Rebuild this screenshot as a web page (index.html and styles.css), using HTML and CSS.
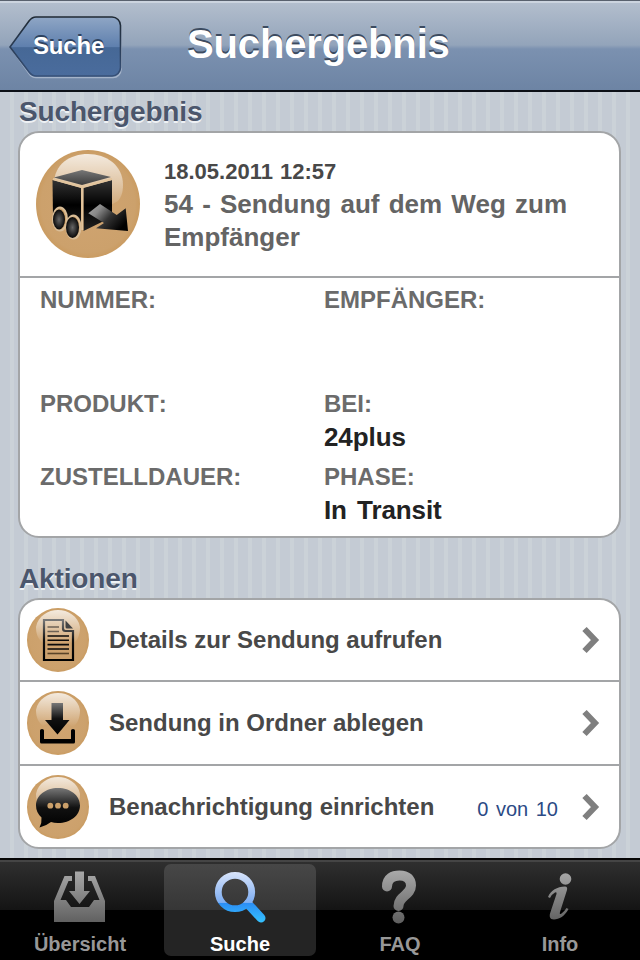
FILE: index.html
```html
<!DOCTYPE html>
<html lang="de">

<head>
    <meta charset="UTF-8">
    <meta name="viewport" content="width=device-width, initial-scale=1.0">
    <title>Suchergebnis</title>
    <link rel="stylesheet" href="styles.css">
</head>

<body>
    <!-- shared gradients and the paper button behind the icons -->
    <svg class="defs" width="0" height="0">
        <defs>
            <linearGradient id="gloss" x1="0" y1="0" x2="0" y2="1">
                <stop offset="0" stop-color="#fff" stop-opacity=".78"/>
                <stop offset=".5" stop-color="#fff" stop-opacity=".4"/>
                <stop offset="1" stop-color="#fff" stop-opacity="0"/>
            </linearGradient>
            <linearGradient id="ink" x1="0" y1="0" x2="0" y2="1">
                <stop offset="0" stop-color="#777"/>
                <stop offset=".5" stop-color="#111"/>
                <stop offset="1" stop-color="#000"/>
            </linearGradient>
            <linearGradient id="lid" x1="0" y1="0" x2="0" y2="1">
                <stop offset="0" stop-color="#777"/>
                <stop offset="1" stop-color="#3c3c3c"/>
            </linearGradient>
            <linearGradient id="side" x1="0" y1="0" x2="0" y2="1">
                <stop offset="0" stop-color="#333"/>
                <stop offset=".5" stop-color="#000"/>
                <stop offset="1" stop-color="#222"/>
            </linearGradient>
            <linearGradient id="arrow" x1="0" y1="0" x2="1" y2=".6">
                <stop offset="0" stop-color="#aaa"/>
                <stop offset=".3" stop-color="#888"/>
                <stop offset=".6" stop-color="#333"/>
                <stop offset="1" stop-color="#000"/>
            </linearGradient>
            <radialGradient id="wheel">
                <stop offset="0" stop-color="#666"/>
                <stop offset="1" stop-color="#080808"/>
            </radialGradient>
            <radialGradient id="paper">
                <stop offset="0" stop-color="#d0a471"/>
                <stop offset=".9" stop-color="#cca16c"/>
                <stop offset="1" stop-color="#ca9c62"/>
            </radialGradient>
            <linearGradient id="grey" gradientUnits="userSpaceOnUse" x1="0" y1="0" x2="0" y2="54">
                <stop offset="0" stop-color="#aaa"/>
                <stop offset="1" stop-color="#5e5e5e"/>
            </linearGradient>
            <linearGradient id="blue" gradientUnits="userSpaceOnUse" x1="0" y1="0" x2="0" y2="54">
                <stop offset="0" stop-color="#dfe8fb"/>
                <stop offset=".5" stop-color="#8db6f3"/>
                <stop offset=".6" stop-color="#7fb0f3"/>
                <stop offset=".62" stop-color="#2c8ff5"/>
                <stop offset="1" stop-color="#35c6ff"/>
            </linearGradient>
            <symbol id="button" viewBox="0 0 62 64">
                <ellipse cx="31" cy="32" rx="31" ry="32" fill="url(#paper)"/>
                <path d="M9 19C11 8 21 2 31 2s20 6 22 17c0 9-3 14-7 17-9-6-21-6-30-1-5-4-7-9-7-16z" fill="url(#gloss)"/>
            </symbol>
        </defs>
    </svg>

    <header class="navbar">
        <a class="back">
            <svg class="back-shape" width="114" height="64" viewBox="0 0 114 64">
                <defs>
                    <linearGradient id="backfill" x1="0" y1="0" x2="0" y2="1">
                        <stop offset="0" stop-color="#8fa6c5"/>
                        <stop offset=".5" stop-color="#5f80ae"/>
                        <stop offset=".52" stop-color="#466896"/>
                        <stop offset="1" stop-color="#4a6c9d"/>
                    </linearGradient>
                    <linearGradient id="backline" x1="0" y1="0" x2="0" y2="1">
                        <stop offset="0" stop-color="#1f2933"/>
                        <stop offset="1" stop-color="#365078"/>
                    </linearGradient>
                </defs>
                <path d="M27 2.500H104a8 8 0 0 1 8 8V53.500a8 8 0 0 1-8 8H27q-4 0-7-4L2 32 20 6.500q3-4 7-4z" fill="none" stroke="#a5b4ca" stroke-width="1.500"/>
                <path d="M27 1H103a8.500 8.500 0 0 1 8.500 8.500V51.500a8.500 8.500 0 0 1-8.500 8.500H27q-4 0-7-4L1 31 20 5q3-4 7-4z" fill="url(#backfill)" stroke="url(#backline)" stroke-width="1.600"/>
            </svg>
            <span class="back-text">Suche</span>
        </a>
        <h1>Suchergebnis</h1>
    </header>

    <main class="content">
        <h2>Suchergebnis</h2>
        <section class="card result">
            <div class="status">
                <svg class="status-icon" width="104" height="108" viewBox="0 0 104 108">
                    <ellipse cx="52" cy="54" rx="52" ry="54" fill="url(#paper)"/>
                    <path d="M18 34C18 14 34 4 52 4s35 11 35 31c0 8-2 12-5 16C67 60 39 68 29 58 21 50 18 44 18 34z" fill="url(#gloss)"/>
                    <path d="M18 27.500 46 20 75 27 46 35z" fill="url(#lid)"/>
                    <path d="M16.500 30 45 38V80L17 68z" fill="url(#side)"/>
                    <path d="M47.500 38 76 30V67L47.500 81z" fill="url(#side)"/>
                    <path d="M17 29 46 37 76 29M46.300 37V80" fill="none" stroke="#e2c49c" stroke-width="2"/>
                    <ellipse cx="24" cy="69" rx="7" ry="11.500" fill="#cba06a" stroke="#d9bd97" stroke-width="2"/>
                    <ellipse cx="37.500" cy="77" rx="7" ry="11.500" fill="#cba06a" stroke="#d9bd97" stroke-width="2"/>
                    <ellipse cx="23" cy="69.500" rx="6" ry="10" fill="url(#wheel)"/>
                    <ellipse cx="36.500" cy="77.500" rx="6.500" ry="10.500" fill="url(#wheel)"/>
                    <path d="M52.300 63.300 64 54 80.700 65 89.700 58.300 92 81 60 78.300 68 73z" fill="url(#arrow)"/>
                </svg>
                <div class="status-text">
                    <p class="date">18.05.2011 12:57</p>
                    <p class="message">54 - Sendung auf dem Weg zum Empfänger</p>
                </div>
            </div>
            <dl class="details">
                <div><dt>NUMMER:</dt></div>
                <div><dt>EMPFÄNGER:</dt></div>
                <div><dt>PRODUKT:</dt></div>
                <div><dt>BEI:</dt><dd>24plus</dd></div>
                <div><dt>ZUSTELLDAUER:</dt></div>
                <div><dt>PHASE:</dt><dd>In Transit</dd></div>
            </dl>
        </section>

        <h2 class="second">Aktionen</h2>
        <ul class="card actions">
            <li>
                <svg class="icon" width="62" height="64" viewBox="0 0 62 64">
                    <use href="#button" width="62" height="64"/>
                    <path d="M17 12H36V20.500q0 2.500 2.500 2.500H46V52H17z" fill="none" stroke="url(#ink)" stroke-width="2.200"/>
                    <path d="M38.500 12.500 46 20.500H40q-1.500 0-1.500-1.500z" fill="#444"/>
                    <path d="M20.500 19H32M20.500 23.500H32" stroke="#6e6255" stroke-width="1.500"/>
                    <path d="M20.500 28H42M20.500 32.300H42M20.500 36.600H42M20.500 41H42" stroke="#0a0a0a" stroke-width="1.600"/>
                    <path d="M20.500 45.500H42" stroke="#5a4428" stroke-width="1.600"/>
                </svg>
                <span class="label">Details zur Sendung aufrufen</span>
                <svg class="chevron" width="20" height="28" viewBox="0 0 20 28"><path d="M3.500 3 14 14 3.500 25" fill="none" stroke="#7f7f7f" stroke-width="6"/></svg>
            </li>
            <li>
                <svg class="icon" width="62" height="64" viewBox="0 0 62 64">
                    <use href="#button" width="62" height="64"/>
                    <path d="M24.500 12H36V29H42.500L30.500 43.500 18 29H24.500z" fill="url(#ink)"/>
                    <path d="M13 39.500q0-1.500 2-1.500t2 1.500V48H44V39.500q0-1.500 2-1.500t2 1.500V51q0 1.500-1.500 1.500H14.500Q13 52.500 13 51z" fill="#000"/>
                </svg>
                <span class="label">Sendung in Ordner ablegen</span>
                <svg class="chevron" width="20" height="28" viewBox="0 0 20 28"><path d="M3.500 3 14 14 3.500 25" fill="none" stroke="#7f7f7f" stroke-width="6"/></svg>
            </li>
            <li>
                <svg class="icon" width="62" height="64" viewBox="0 0 62 64">
                    <use href="#button" width="62" height="64"/>
                    <path d="M31 13C43.500 13 53 20.500 53 30.500S43.500 48 31 48q-4 0-7-1-5 4-11.500 5.500Q15 48 14.500 42.500 9 37.500 9 30.500C9 20.500 18.500 13 31 13z" fill="url(#ink)"/>
                    <g fill="#cba06a"><circle cx="23.300" cy="30.700" r="2.900"/><circle cx="31" cy="30.700" r="2.900"/><circle cx="38.700" cy="30.700" r="2.900"/></g>
                </svg>
                <span class="label">Benachrichtigung einrichten</span>
                <span class="count">0 von 10</span>
                <svg class="chevron" width="20" height="28" viewBox="0 0 20 28"><path d="M3.500 3 14 14 3.500 25" fill="none" stroke="#7f7f7f" stroke-width="6"/></svg>
            </li>
        </ul>
    </main>

    <nav class="tabbar">
        <a class="tab">
            <svg width="60" height="56" viewBox="0 0 60 56">
                <path d="M14.500 6H22V11H18.500L10.500 30H16L21 37H39L44 30H49.500L41.500 11H38V6H45L55 31V52H4V31z" fill="url(#grey)"/>
                <path d="M25 1.500H34V21H40L29.500 34 19 21H25z" fill="url(#grey)"/>
            </svg>
            <span>Übersicht</span>
        </a>
        <a class="tab active">
            <svg width="60" height="56" viewBox="0 0 60 56">
                <path d="M38 34 51 48" stroke="url(#blue)" stroke-width="9" stroke-linecap="round"/>
                <circle cx="25" cy="22" r="16.700" fill="none" stroke="url(#blue)" stroke-width="6.800"/>
            </svg>
            <span>Suche</span>
        </a>
        <a class="tab">
            <svg width="60" height="56" viewBox="0 0 60 56">
                <path d="M17 16.500C17 8 23 5.500 29.500 5.500 37 5.500 41 9 41 15.500 41 25 28.500 26 28.500 36" fill="none" stroke="url(#grey)" stroke-width="10" stroke-linecap="round"/>
                <circle cx="28.500" cy="47.500" r="6" fill="url(#grey)"/>
            </svg>
            <span>FAQ</span>
        </a>
        <a class="tab">
            <svg width="60" height="56" viewBox="0 0 60 56">
                <circle cx="35.500" cy="9" r="5.800" fill="url(#grey)"/>
                <path d="M18 27C21 20 27 17 35 16.500 37 16.500 37.500 18 37 20L30 42Q29 45 31.500 43.500 34 42 36.500 38L38.500 39C35 46 29 49.500 24 49.500 19.500 49.500 19 46 20.500 42L26.500 24Q27 21.500 25 22.500 22 24 20 28z" fill="url(#grey)"/>
            </svg>
            <span>Info</span>
        </a>
    </nav>
</body>

</html>
```

FILE: styles.css
```css
* {
    margin: 0;
    padding: 0;
    box-sizing: border-box;
}

body {
    width: 640px;
    height: 960px;
    display: flex;
    flex-direction: column;
    overflow: hidden;
    font-family: "Liberation Sans", Arial, sans-serif;
    font-weight: bold;
    background: repeating-linear-gradient(90deg, #c4cbd4 0, #c4cbd4 9.500px, #cbd2d8 10px, #cbd2d8 13.500px, #c4cbd4 14px);
}

.defs {
    position: absolute;
}

.navbar {
    height: 92px;
    display: grid;
    grid-template-columns: 114px 1fr;
    padding: 15px 0 0 9px;
    background: linear-gradient(#b4bfce 0, #93a4ba 44px, #7b91b0 48px, #6d84a4 100%);
    border-top: 1px solid #59616e;
    border-bottom: 2px solid #0b0f16;
    box-shadow: inset 0 2px 0 #ccd4df;
}

.back {
    display: grid;
    height: 64px;
    color: #fff;
    font-size: 24px;
    line-height: 60px;
    letter-spacing: -0.200px;
    text-shadow: 0 -2px 0 #2e4360;
}

.back-shape,
.back-text {
    grid-area: 1 / 1;
}

.back-text {
    padding-left: 24px;
}

.navbar h1 {
    padding-left: 64px;
    color: #fff;
    font-size: 40px;
    line-height: 56px;
    letter-spacing: -0.150px;
    text-shadow: 0 -2px 0 #3c4b60;
}

.content {
    height: 766px;
    padding: 0 19px 0 18px;
}

h2 {
    height: 39px;
    padding-left: 1px;
    color: #4b566c;
    font-size: 28px;
    line-height: 40px;
    letter-spacing: -0.150px;
    text-shadow: 0 2px 0 #eef1f4;
}

.second {
    height: 60px;
    line-height: 82px;
}

.card {
    background: #fff;
    border: 2px solid #a3a5a7;
    border-radius: 21px;
}

.result {
    height: 407px;
}

.status {
    display: flex;
    height: 145px;
    padding: 17px 0 0 16px;
    border-bottom: 2px solid #a3a5a7;
}

.status-text {
    width: 445px;
    padding: 9px 0 0 24px;
    color: #646464;
}

.date {
    color: #484848;
    font-size: 22px;
    line-height: 26px;
    word-spacing: 1px;
}

.message {
    font-size: 26px;
    line-height: 33px;
    padding-top: 3px;
    word-spacing: 2px;
}

.details {
    display: grid;
    grid-template-columns: 284px 1fr;
    grid-template-rows: 104px 73px 73px;
    padding: 6px 0 0 20px;
}

.details dt {
    color: #6b6b6b;
    font-size: 24px;
    line-height: 32px;
    font-kerning: none;
}

.details dd {
    color: #222;
    font-size: 26px;
    line-height: 34px;
    letter-spacing: -0.100px;
    word-spacing: 3px;
}

.actions {
    list-style: none;
}

.actions li {
    display: flex;
    align-items: center;
    height: 84px;
    padding: 0 18px 0 7px;
    border-bottom: 2px solid #a3a5a7;
}

.actions li:first-child {
    height: 82px;
}

.actions li:last-child {
    height: 81px;
    border-bottom: 0;
}

.label {
    flex: 1;
    padding-left: 20px;
    color: #484848;
    font-size: 24px;
}

.count {
    padding: 5px 23px 0 0;
    color: #2b4a85;
    font-size: 20px;
    font-weight: normal;
    word-spacing: 2px;
}

.tabbar {
    display: grid;
    grid-template-columns: 154px 152px 154px 152px;
    column-gap: 7px;
    height: 102px;
    padding: 4px 0 0 3px;
    background: linear-gradient(#303030 0, #141414 50px, #000 50px);
    border-top: 2px solid #050505;
    box-shadow: inset 0 2px 0 #454545;
}

.tab {
    display: flex;
    flex-direction: column;
    align-items: center;
    height: 92px;
    padding-top: 6px;
    border-radius: 7px;
    color: #989898;
    font-size: 20px;
    line-height: 22px;
}

.tab span {
    padding-top: 7px;
}

.active {
    color: #fff;
    background: linear-gradient(#474747 0, #363636 46px, #242424 46px);
}
```
